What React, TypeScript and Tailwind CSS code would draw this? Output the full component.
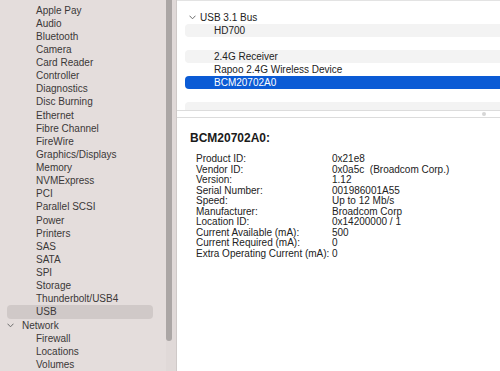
import React from "react";

const sidebarItems = [
  "Apple Pay",
  "Audio",
  "Bluetooth",
  "Camera",
  "Card Reader",
  "Controller",
  "Diagnostics",
  "Disc Burning",
  "Ethernet",
  "Fibre Channel",
  "FireWire",
  "Graphics/Displays",
  "Memory",
  "NVMExpress",
  "PCI",
  "Parallel SCSI",
  "Power",
  "Printers",
  "SAS",
  "SATA",
  "SPI",
  "Storage",
  "Thunderbolt/USB4",
];

const details: [string, string][] = [
  ["Product ID:", "0x21e8"],
  ["Vendor ID:", "0x0a5c  (Broadcom Corp.)"],
  ["Version:", "1.12"],
  ["Serial Number:", "001986001A55"],
  ["Speed:", "Up to 12 Mb/s"],
  ["Manufacturer:", "Broadcom Corp"],
  ["Location ID:", "0x14200000 / 1"],
  ["Current Available (mA):", "500"],
  ["Current Required (mA):", "0"],
  ["Extra Operating Current (mA):", "0"],
];

function Chevron({ className }: { className?: string }) {
  return (
    <svg width="7" height="5" viewBox="0 0 7 5" className={className}>
      <path d="M0.8 1 L3.5 3.8 L6.2 1" fill="none" stroke="#6e6e6e" strokeWidth="1" strokeLinecap="round" strokeLinejoin="round" />
    </svg>
  );
}

function Sidebar() {
  return (
    <div className="relative w-[177px] shrink-0 bg-[#e4dddc] border-r border-[#cfc9c8] text-[10px] text-[#3b3838]">
      <div className="pt-[3.5px]">
        {sidebarItems.map((item) => (
          <div key={item} className="h-[13.14px] flex items-center pl-[36px] whitespace-nowrap">
            {item}
          </div>
        ))}
        <div className="h-[13.14px] mx-[7px] mr-[23px] rounded-[4px] bg-[#d0c9c8] flex items-center pl-[29px]">
          USB
        </div>
        <div className="h-[13.14px] flex items-center pl-[7px]">
          <Chevron className="mr-[8px]" />
          Network
        </div>
        {["Firewall", "Locations", "Volumes"].map((item) => (
          <div key={item} className="h-[13.14px] flex items-center pl-[36px]">
            {item}
          </div>
        ))}
      </div>
      {/* scrollbar overlay */}
      <div className="absolute top-0 right-0 h-full w-[10px] bg-[#e0d9d8]">
        <div className="w-[6px] h-[341px] rounded-b-[3px] bg-[#aba6a5]" />
      </div>
    </div>
  );
}

function OutlineRow({
  label,
  tone,
}: {
  label: string;
  tone: "white" | "gray" | "blue";
}) {
  const bg =
    tone === "blue" ? "bg-[#0b5bd5] text-white" : tone === "gray" ? "bg-[#f3f3f3]" : "";
  return (
    <div className={`h-[13px] ml-[8px] rounded-l-[4px] flex items-center pl-[29px] whitespace-nowrap ${bg}`}>
      {label}
    </div>
  );
}

export default function App() {
  return (
    <div
      className="w-[500px] h-[371px] overflow-hidden flex bg-white"
      style={{ fontFamily: '"Liberation Sans", Arial, sans-serif' }}
    >
      <Sidebar />
      <div className="flex-1 flex flex-col min-w-0 text-[10px] text-[#222]">
        <div className="h-[110px] border-t border-[#e3e3e3] pt-[9.5px] overflow-hidden">
          <div className="h-[13px] flex items-center pl-[12px]">
            <Chevron className="mr-[4px]" />
            USB 3.1 Bus
          </div>
          <OutlineRow label="HD700" tone="gray" />
          <OutlineRow label="" tone="white" />
          <OutlineRow label="2.4G Receiver" tone="gray" />
          <OutlineRow label="Rapoo 2.4G Wireless Device" tone="white" />
          <OutlineRow label="BCM20702A0" tone="blue" />
          <OutlineRow label="" tone="white" />
          <OutlineRow label="" tone="gray" />
        </div>
        <div className="h-[8px] border-y border-[#dcdcdc] flex items-center justify-end pr-[14px]">
          <div className="w-[4px] h-[4px] rounded-full bg-[#d6d6d6]" />
        </div>
        <div className="flex-1 pl-[13px] pt-[13px]">
          <div className="text-[12px] font-bold text-[#1a1a1a] leading-[14px]">BCM20702A0:</div>
          <div className="mt-[9px] pl-[6px] grid grid-cols-[136px_1fr] leading-[10.5px]">
            {details.map(([k, v]) => (
              <React.Fragment key={k}>
                <div className="whitespace-nowrap">{k}</div>
                <div className="whitespace-pre">{v}</div>
              </React.Fragment>
            ))}
          </div>
        </div>
      </div>
    </div>
  );
}
